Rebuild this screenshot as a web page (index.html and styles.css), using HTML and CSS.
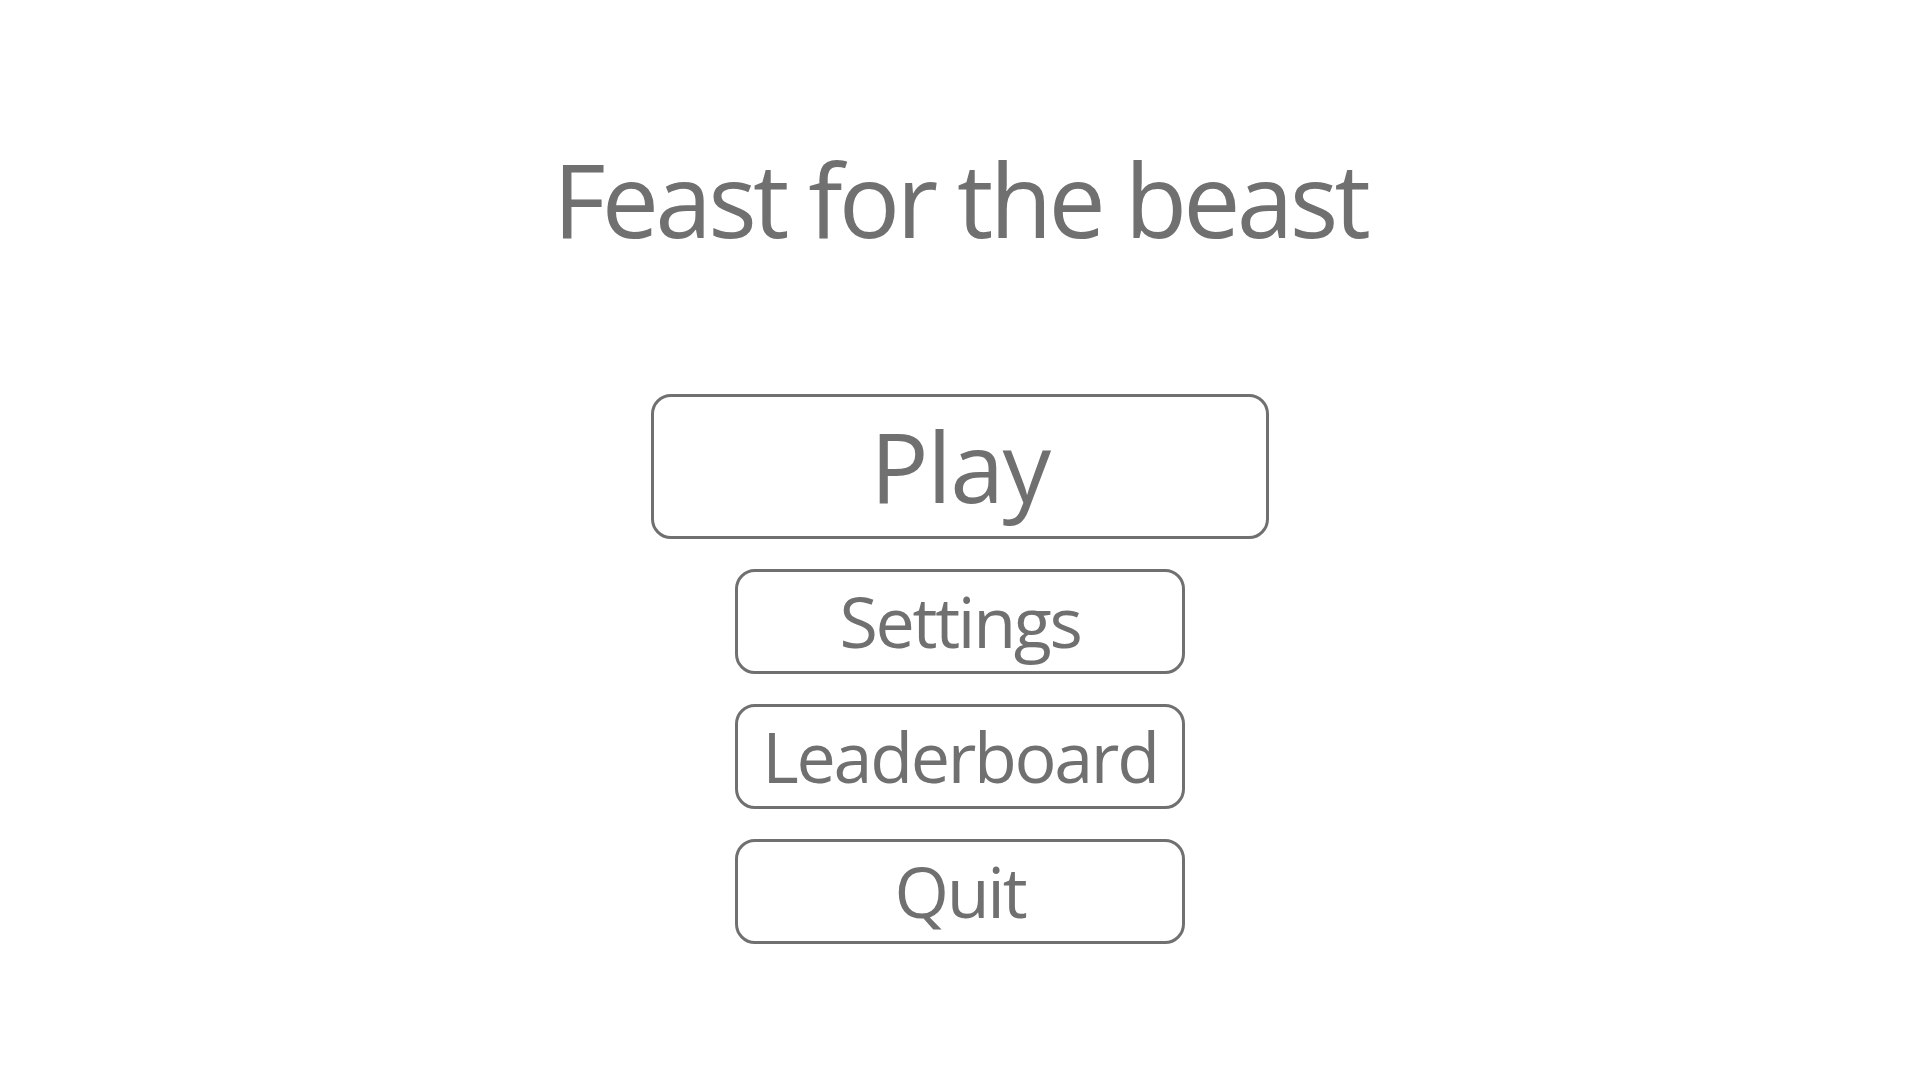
FILE: index.html
```html
<!DOCTYPE html>
<html lang="en">
<head>
<meta charset="utf-8">
<title>Feast for the beast</title>
<link rel="stylesheet" href="styles.css">
</head>
<body>
<main class="menu">
  <h1 class="title">Feast for the beast</h1>
  <nav class="buttons">
    <button class="btn btn-play">Play</button>
    <button class="btn btn-small">Settings</button>
    <button class="btn btn-small">Leaderboard</button>
    <button class="btn btn-small">Quit</button>
  </nav>
</main>
</body>
</html>
```
FILE: styles.css
```css
html, body {
  margin: 0;
  padding: 0;
  background: #ffffff;
}
body {
  width: 1920px;
  height: 1080px;
  font-family: "Open Sans", "Noto Sans", sans-serif;
  color: #707070;
  font-variant-ligatures: none;
}
.menu {
  display: flex;
  flex-direction: column;
  align-items: center;
}
.title {
  margin: 139px 0 0 0;
  font-weight: 400;
  font-size: 102px;
  line-height: 120px;
  letter-spacing: -0.037em;
  color: #707070;
}
.buttons {
  margin-top: 135px;
  display: flex;
  flex-direction: column;
  align-items: center;
  gap: 30px;
}
.btn {
  box-sizing: border-box;
  background: #ffffff;
  border: 3px solid #707070;
  border-radius: 20px;
  color: #707070;
  font-family: "Open Sans", "Noto Sans", sans-serif;
  font-variant-ligatures: none;
  font-weight: 400;
  padding: 0;
  display: flex;
  align-items: center;
  justify-content: center;
}
.btn-play {
  width: 618px;
  height: 145px;
  font-size: 97px;
  letter-spacing: -0.015em;
  padding-bottom: 4px;
}
.btn-small {
  width: 450px;
  height: 105px;
  font-size: 70px;
  letter-spacing: -0.033em;
  padding-bottom: 2px;
}
```
